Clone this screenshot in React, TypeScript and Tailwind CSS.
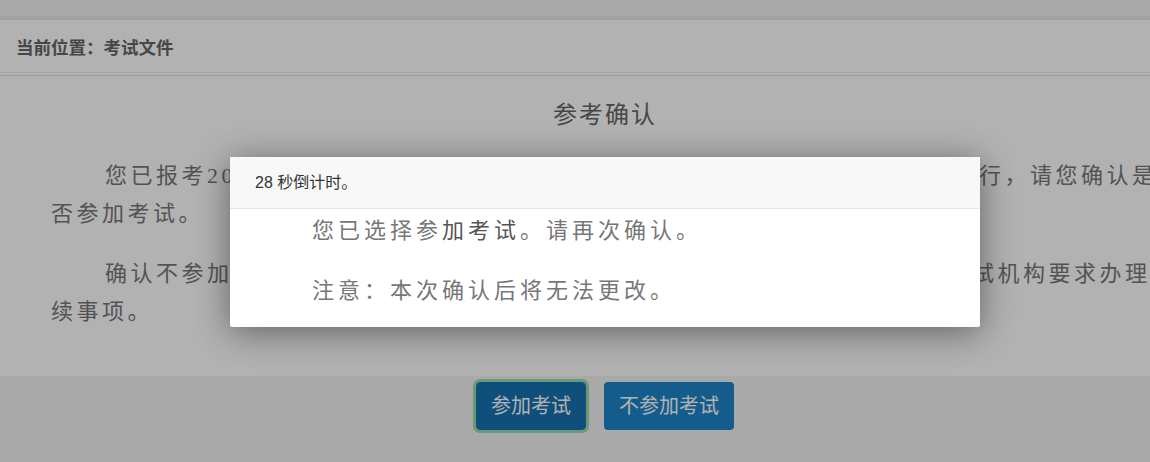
export default function App() {
  const body = "font-['Liberation_Serif','Noto_Sans_CJK_SC',serif] text-[22px] leading-[38px] tracking-[3.5px] text-[#777] whitespace-nowrap";

  return (
    <div className="relative h-[462px] w-[1150px] overflow-hidden bg-white font-['Liberation_Sans','Noto_Sans_CJK_SC',sans-serif]">
      <div className="flex h-full w-[1210px] flex-col">
        <div className="h-[16px] bg-[#f3f3f3]" />
        <div className="h-[4px] bg-[#e9e9e9]" />
        <div className="flex h-[53px] items-center border-b border-[#ececec] pl-[16px] pt-[4px] text-[17.5px] font-bold text-[#666]">
          当前位置：考试文件
        </div>
        <div className="mt-[2px] h-[301px] border-t border-[#dcdcdc] px-[51px]">
          <h2 className="pt-[22px] text-center text-[24px] leading-[34px] tracking-[2px] text-[#666]">参考确认</h2>
          <div className="mt-[25px] flex flex-col gap-[22px]">
            <p className={body}>
              <span className="pl-[54px]">您已报考2024年度全国专业技术人员职业资格考试，考试将于本月下旬统一举行，请您确认是</span>
              <br />
              否参加考试。
            </p>
            <p className={body}>
              <span className="pl-[54px]">确认不参加考试的考生，已缴纳的考试费用将不予退还，请按照有关规定及考试机构要求办理手</span>
              <br />
              续事项。
            </p>
          </div>
        </div>
        <div className="flex flex-1 justify-center gap-[18px] bg-[#f3f3f3] pt-[6px]">
          <button className="h-[48px] rounded-[4px] bg-[#1571b1] px-[15px] text-[20px] text-white outline-3 outline-[#99dcab]">
            参加考试
          </button>
          <button className="h-[48px] rounded-[4px] bg-[#1d84c8] px-[15px] text-[20px] text-white">
            不参加考试
          </button>
        </div>
      </div>

      <div className="absolute inset-0 bg-black/30" />

      <div className="absolute left-[230px] top-[157px] w-[750px] rounded-[2px] bg-white shadow-[0_5px_35px_rgba(0,0,0,0.45)]">
        <div className="flex h-[52px] items-center border-b border-[#e5e5e5] bg-[#f8f8f8] pl-[25px] text-[16px] text-[#333]">
          28 秒倒计时。
        </div>
        <div className="flex flex-col gap-[22px] pb-[17px] pl-[28px] pt-[3px]">
          <p className={body + " pl-[54px] tracking-[4px]"}>
            您已选择参<span className="text-[#555]">加考试</span>。请再次确认。
          </p>
          <p className={body + " pl-[54px] tracking-[4px]"}>注意：本次确认后将无法更改。</p>
        </div>
      </div>
    </div>
  );
}
